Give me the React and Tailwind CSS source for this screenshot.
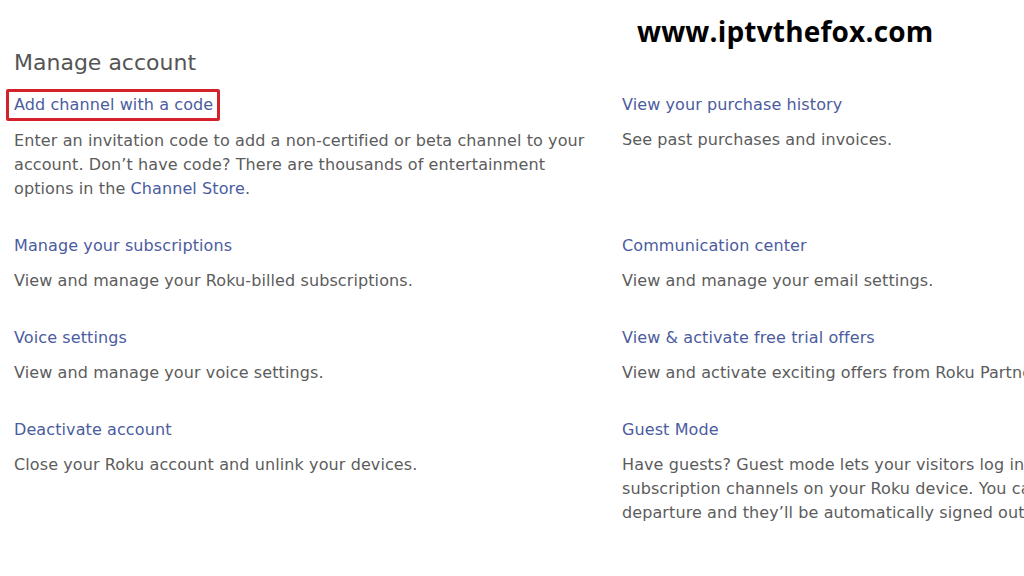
import React from 'react';

const items = [
  {
    title: 'Add channel with a code',
    boxed: true,
    body: (
      <>
        Enter an invitation code to add a non-certified or beta channel to your
        <br />
        account. Don’t have code? There are thousands of entertainment
        <br />
        options in the <span className="text-[#4b5c9e]">Channel Store</span>.
      </>
    ),
  },
  {
    title: 'View your purchase history',
    body: 'See past purchases and invoices.',
  },
  {
    title: 'Manage your subscriptions',
    body: 'View and manage your Roku-billed subscriptions.',
  },
  {
    title: 'Communication center',
    body: 'View and manage your email settings.',
  },
  {
    title: 'Voice settings',
    body: 'View and manage your voice settings.',
  },
  {
    title: 'View & activate free trial offers',
    body: 'View and activate exciting offers from Roku Partners.',
  },
  {
    title: 'Deactivate account',
    body: 'Close your Roku account and unlink your devices.',
  },
  {
    title: 'Guest Mode',
    body: (
      <>
        Have guests? Guest mode lets your visitors log in to their own
        <br />
        subscription channels on your Roku device. You can set the date of their
        <br />
        departure and they’ll be automatically signed out.
      </>
    ),
  },
];

function Item({ title, body, boxed }) {
  return (
    <div>
      {boxed ? (
        <div>
          <span className="-mx-[8px] -my-[4px] inline-block rounded-[2px] border-[3px] border-[#d3222c] py-[1px] pl-[5px] pr-[4px] text-[#4b5c9e]">
            {title}
          </span>
        </div>
      ) : (
        <div className="text-[#4b5c9e]">{title}</div>
      )}
      <p className={boxed ? 'mt-[12px]' : 'mt-[11px]'}>{body}</p>
    </div>
  );
}

export default function App() {
  return (
    <div
      className="relative h-[576px] w-[1024px] overflow-hidden bg-white text-[16px] leading-[24px] tracking-[0.1px] text-[#5c5c5c] whitespace-nowrap"
      style={{ fontFamily: '"DejaVu Sans", "Open Sans", sans-serif' }}
    >
      <div
        className="absolute left-[637px] top-[12px] text-[28px] leading-[38px] font-bold tracking-[0.2px] text-black"
        style={{ fontFamily: '"Open Sans", sans-serif' }}
      >
        www.iptvthefox.com
      </div>

      <div className="pl-[14px] pt-[49px]">
        <h1 className="text-[22px] leading-[28px] tracking-normal text-[#555]">Manage account</h1>
        <div className="mt-[16px] grid w-[1198px] grid-cols-[590px_590px] gap-x-[18px] gap-y-[33px]">
          {items.map((it) => (
            <Item key={it.title} {...it} />
          ))}
        </div>
      </div>
    </div>
  );
}
